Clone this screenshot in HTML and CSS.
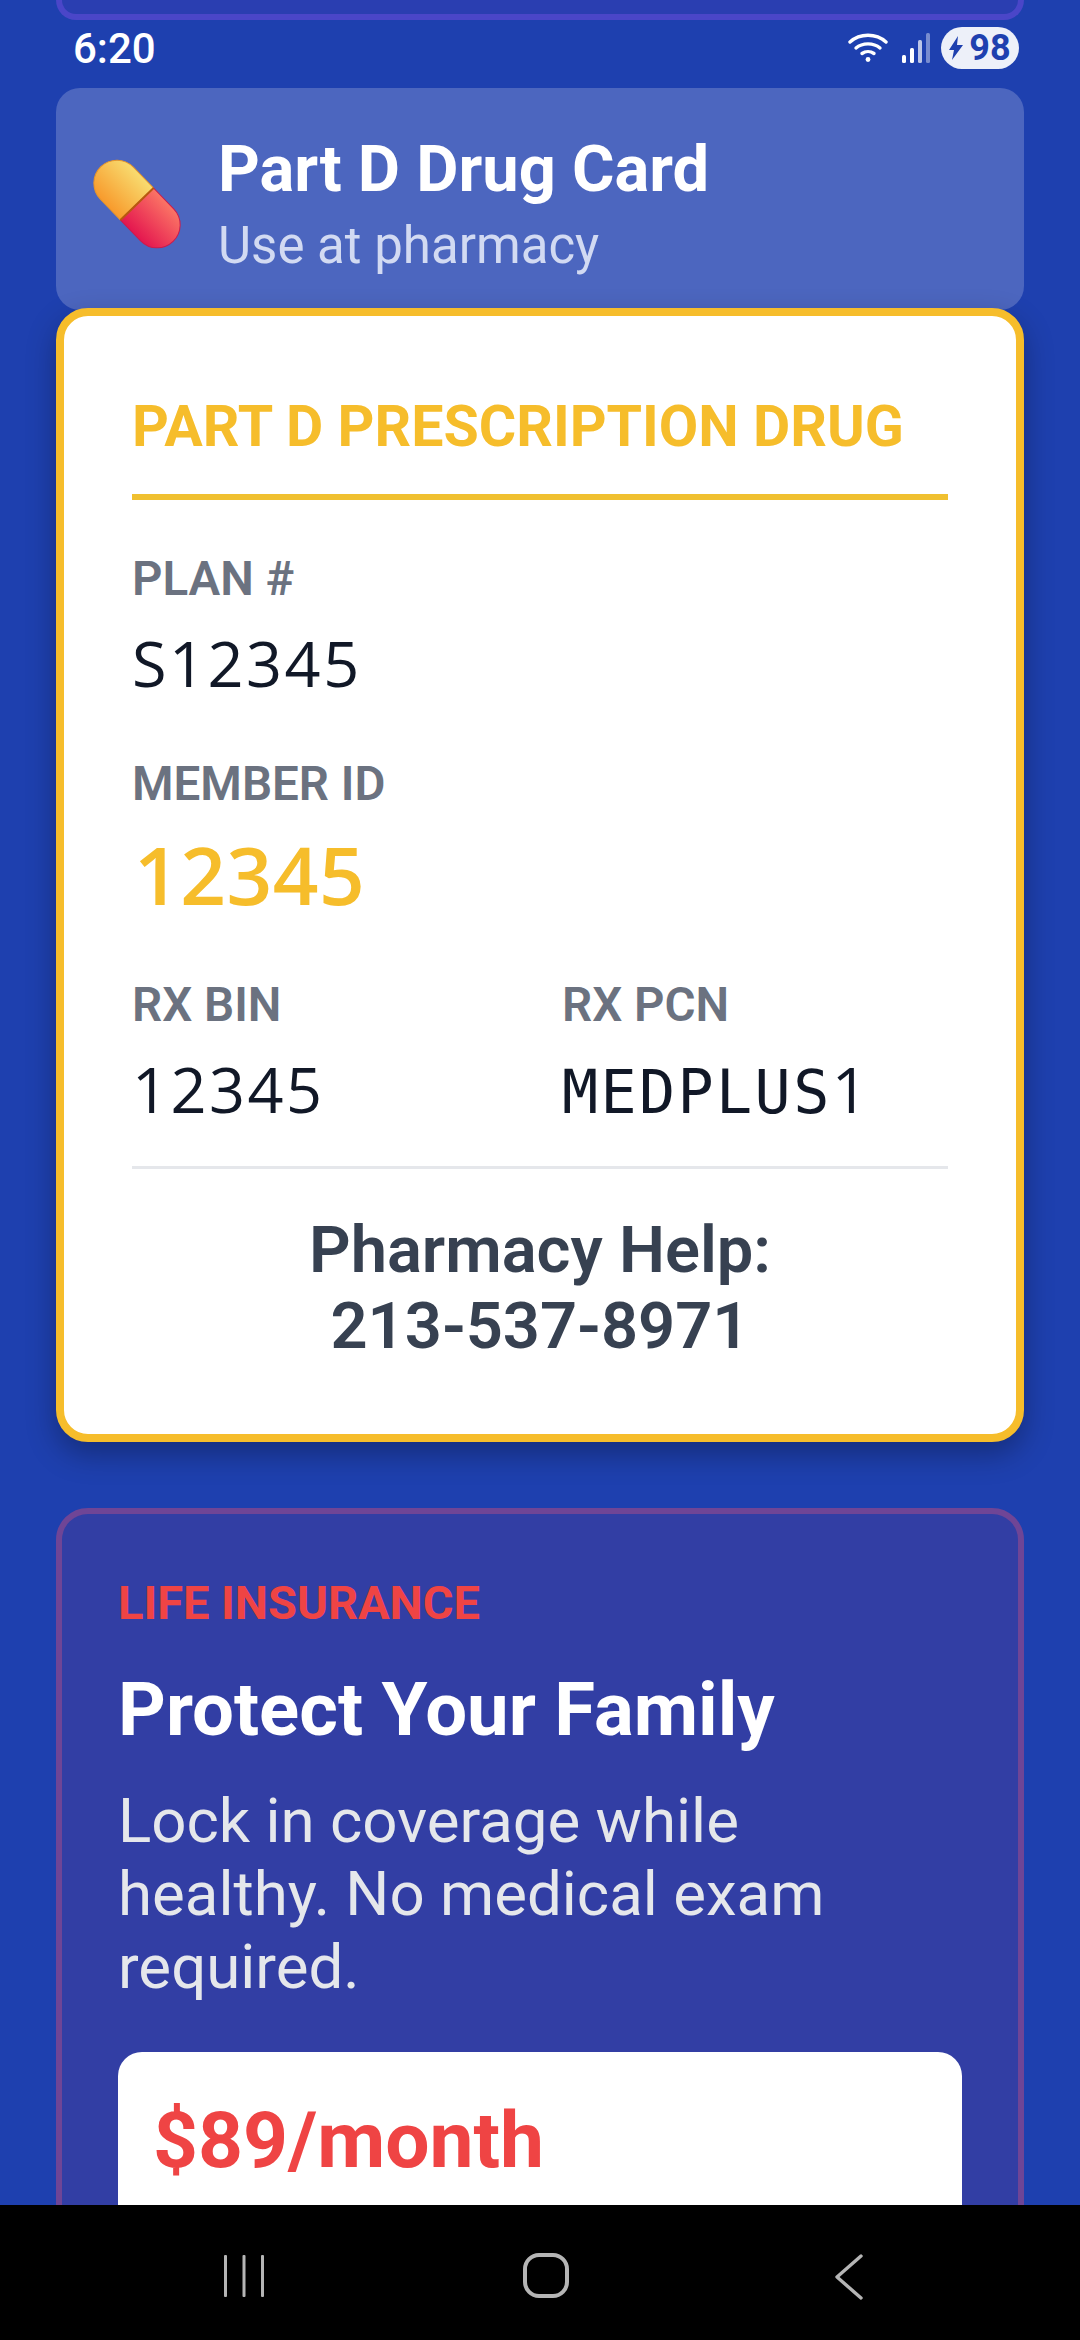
FILE: index.html
```html
<!DOCTYPE html>
<html lang="en">
<head>
<meta charset="utf-8">
<title>Part D Drug Card</title>
<link rel="stylesheet" href="styles.css">
</head>
<body>
<div class="screen">
  <main class="content">
    <div class="prev-card"></div>
    <div class="status">
      <span class="time">6:20</span>
      <div class="status-icons">
        <svg class="wifi" width="40" height="30" viewBox="0 0 40 30" fill="none" stroke="#fff" stroke-width="3.4" stroke-linecap="round">
          <path d="M2 9C12 0 28 0 38 9"/>
          <path d="M8 15C14.500 9.500 25.500 9.500 32 15"/>
          <path d="M14 20.500C17.500 18 22.500 18 26 20.500"/>
          <circle cx="20" cy="26.500" r="2.400" fill="#fff" stroke="none"/>
        </svg>
        <svg class="signal" width="28" height="30" viewBox="0 0 28 30">
          <rect x="0" y="22" width="4" height="8" rx="1.500" fill="#fff"/>
          <rect x="8" y="15" width="4" height="15" rx="1.500" fill="#fff"/>
          <rect x="16" y="7" width="4" height="23" rx="1.500" fill="#fff" opacity=".7"/>
          <rect x="24" y="0" width="4" height="30" rx="1.500" fill="#fff" opacity=".4"/>
        </svg>
        <div class="battery">
          <svg width="14" height="24" viewBox="0 0 14 24"><path d="M9 0 0 14h5l-2 10L14 9H8z" fill="#1e40af"/></svg>
          <span>98</span>
        </div>
      </div>
    </div>
    <header class="header">
      <svg class="pill" width="92" height="92" viewBox="0 0 92 92">
        <defs>
          <linearGradient id="y" x1="0" y1="0" x2="0" y2="1"><stop offset="0" stop-color="#f8dc70"/><stop offset="1" stop-color="#f89a2c"/></linearGradient>
          <linearGradient id="r" x1="0" y1="0" x2="0" y2="1"><stop offset="0" stop-color="#fb7565"/><stop offset="1" stop-color="#e4164f"/></linearGradient>
        </defs>
        <g transform="rotate(46 46 46)">
          <path d="M46 23H17a23 23 0 0 0 0 46H46Z" fill="url(#y)" stroke="#e8962a" stroke-width="1"/>
          <path d="M46 23H75a23 23 0 0 1 0 46H46Z" fill="url(#r)" stroke="#cc1a4c" stroke-width="1"/>
          <path d="M46 23V69" stroke="#b9590f" stroke-width="2"/>
        </g>
      </svg>
      <div class="header-text">
        <h1>Part D Drug Card</h1>
        <p>Use at pharmacy</p>
      </div>
    </header>
    <section class="drug-card">
      <h2>PART D PRESCRIPTION DRUG</h2>
      <div class="field">
        <div class="label">PLAN #</div>
        <div class="mono">S12345</div>
      </div>
      <div class="field member-field">
        <div class="label">MEMBER ID</div>
        <div class="member">12345</div>
      </div>
      <div class="two-col">
        <div>
          <div class="label">RX BIN</div>
          <div class="mono">12345</div>
        </div>
        <div>
          <div class="label">RX PCN</div>
          <div class="mono wide">MEDPLUS<span class="mono-one">1</span></div>
        </div>
      </div>
      <div class="help">Pharmacy Help:<br>213-537-8971</div>
    </section>
    <section class="life-card">
      <div class="eyebrow">LIFE INSURANCE</div>
      <h3>Protect Your Family</h3>
      <p class="life-text">Lock in coverage while healthy. No medical exam required.</p>
      <div class="price-box"><span class="price">$89/month</span></div>
    </section>
  </main>
  <nav class="nav">
    <svg class="nav-recent" width="44" height="44" viewBox="0 0 44 44" fill="#b5b5b5"><rect x="2" y="2" width="3" height="42" rx="1"/><rect x="20.500" y="2" width="3" height="42" rx="1"/><rect x="39" y="2" width="3" height="42" rx="1"/></svg>
    <svg class="nav-home" width="46" height="45" viewBox="0 0 46 45" fill="none" stroke="#b5b5b5" stroke-width="4"><rect x="2" y="2" width="42" height="41" rx="14"/></svg>
    <svg class="nav-back" width="28" height="46" viewBox="0 0 28 46" fill="none" stroke="#b5b5b5" stroke-width="3.400" stroke-linecap="round" stroke-linejoin="round"><path d="M26 2 2 23l24 21"/></svg>
  </nav>
</div>
</body>
</html>
```
FILE: styles.css
```css
* { box-sizing: border-box; }
html, body { margin: 0; padding: 0; }
body { width: 1080px; height: 2340px; overflow: hidden; font-family: Roboto, sans-serif; background: #1e40af; }
.screen { width: 1080px; height: 2340px; display: flex; flex-direction: column; }
.content { height: 2205px; overflow: hidden; padding: 0 56px; display: flex; flex-direction: column; flex: none; }
.prev-card { height: 20px; flex: none; background: #2a3eb1; border: 6px solid #4a46c8; border-top: 0; border-radius: 0 0 28px 28px; }
.status { height: 68px; flex: none; display: flex; justify-content: space-between; align-items: center; padding: 0 5px 12px 17px; color: #fff; }
.time { font-size: 42px; font-weight: 500; }
.status-icons { display: flex; align-items: center; }
.wifi { margin-right: 14px; }
.signal { margin-right: 11px; }
.battery { width: 78px; height: 42px; border-radius: 21px; background: #edf0f9; color: #1e40af; display: flex; align-items: center; justify-content: center; gap: 6px; font-size: 36px; font-weight: 700; }
.header { height: 222px; flex: none; background: #4c66bf; border-radius: 24px; display: flex; align-items: center; padding: 0 0 0 35px; gap: 35px; }
.pill { flex: none; margin-top: 9px; }
.header-text { padding-top: 8px; }
.header-text h1 { margin: 0; color: #fff; font-size: 65px; font-weight: 700; line-height: 75px; }
.header-text p { margin: 11px 0 0; color: #d2daf2; font-size: 51px; line-height: 56px; }
.drug-card { margin-top: -2px; flex: none; background: #fff; border: 8px solid #f6bd2b; border-radius: 32px; padding: 81px 68px 70px; box-shadow: 0 12px 30px rgba(0,0,0,.3); position: relative; color: #6b7280; }
.drug-card h2 { margin: 0; color: #f6bd2b; font-size: 57.300px; line-height: 60px; font-weight: 700; padding-bottom: 37px; border-bottom: 6px solid #f0c030; }
.label { font-size: 47.500px; font-weight: 600; line-height: 50px; color: #6b7280; }
.field { margin-top: 54px; }
.member-field { margin-top: 61px; }
.mono { font-family: "Open Sans", sans-serif; font-size: 63px; letter-spacing: 2.500px; line-height: 70px; color: #111827; margin-top: 24px; }
.wide { font-family: "DejaVu Sans Mono", monospace; font-size: 60px; letter-spacing: 2.400px; }
.mono-one { font-family: "Open Sans", sans-serif; font-size: 63px; }
.member { font-family: "Open Sans", sans-serif; font-size: 80px; font-weight: 600; letter-spacing: .5px; line-height: 90px; color: #f6bd2b; margin-top: 20px; padding-left: 2px; }
.two-col { display: grid; grid-template-columns: 430px 1fr; margin-top: 61px; padding-bottom: 39px; border-bottom: 3px solid #e5e7eb; }
.help { text-align: center; color: #374151; font-size: 65px; font-weight: 600; line-height: 76px; margin-top: 43px; }
.life-card { margin-top: 66px; flex: none; height: 900px; background: #323ea4; border: 6px solid #6f4596; border-radius: 32px; padding: 62px 56px 0; }
.eyebrow { color: #ef4444; font-size: 47px; font-weight: 700; line-height: 54px; }
h3 { margin: 38px 0 0; color: #fff; font-size: 74.300px; font-weight: 700; line-height: 84px; }
.life-text { margin: 33px 0 0; color: #e5e7eb; font-size: 61.800px; line-height: 73px; }
.price-box { margin-top: 48px; background: #fff; border-radius: 24px; padding: 43px 35px; height: 300px; }
.price { color: #ef4444; font-size: 78.500px; font-weight: 700; line-height: 90px; display: block; }
.nav { height: 135px; flex: none; background: #000; position: relative; }
.nav-recent { position: absolute; left: 222px; top: 48px; }
.nav-home { position: absolute; left: 523px; top: 48px; }
.nav-back { position: absolute; left: 835px; top: 49px; }
```
